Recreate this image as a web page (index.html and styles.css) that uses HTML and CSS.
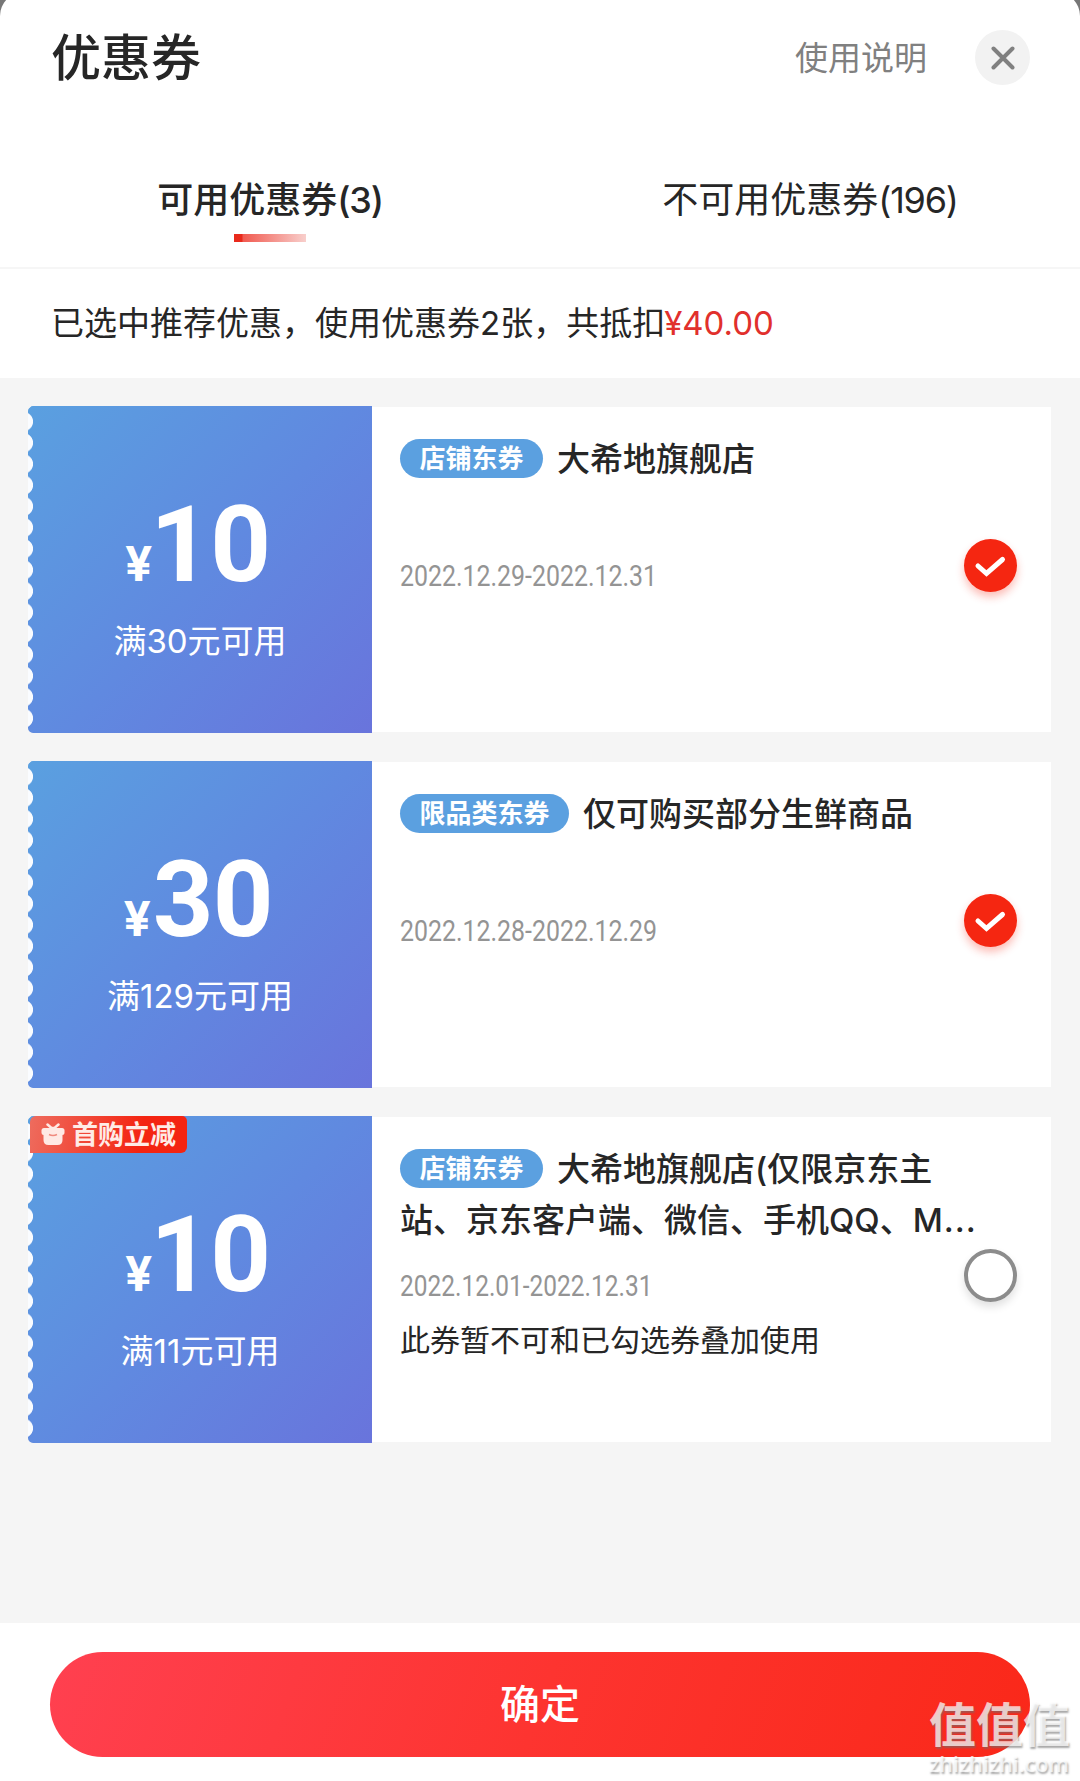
FILE: index.html
```html
<!DOCTYPE html>
<html lang="zh-CN">
<head>
<meta charset="utf-8">
<title>优惠券</title>
<link rel="stylesheet" href="styles.css">
</head>
<body>
<div class="sheet">
  <header class="header">
    <h1 class="heading">优惠券</h1>
    <span class="help">使用说明</span>
    <button class="close" aria-label="关闭">
      <svg width="24" height="24" viewBox="0 0 24 24"><path d="M2.5 2.5 21.5 21.5M21.5 2.5 2.5 21.5" stroke="#808080" stroke-width="4" stroke-linecap="round"/></svg>
    </button>
  </header>
  <nav class="tabs">
    <div class="tab tab-active"><span>可用优惠券<span class="count">(3)</span></span></div>
    <div class="tab"><span>不可用优惠券<span class="count">(196)</span></span></div>
  </nav>
  <p class="summary">已选中推荐优惠，使用优惠券2张，共抵扣<span class="saving">¥40.00</span></p>
  <main class="list">
    <article class="coupon">
      <div class="value">
        <div class="amount"><span class="yen">¥</span>10</div>
        <div class="rule">满30元可用</div>
      </div>
      <div class="info">
        <div class="name"><span class="tag">店铺东券</span>大希地旗舰店</div>
        <div class="date"><span>2022.12.29-2022.12.31</span></div>
      </div>
      <div class="pick">
        <span class="check"><svg width="53" height="53" viewBox="0 0 53 53"><path d="M14 27 22.500 34.500 38.500 20.500" fill="none" stroke="#fff" stroke-width="5" stroke-linecap="round" stroke-linejoin="miter"/></svg></span>
      </div>
    </article>
    <article class="coupon">
      <div class="value">
        <div class="amount amount-wide"><span class="yen">¥</span>30</div>
        <div class="rule">满129元可用</div>
      </div>
      <div class="info">
        <div class="name"><span class="tag">限品类东券</span>仅可购买部分生鲜商品</div>
        <div class="date"><span>2022.12.28-2022.12.29</span></div>
      </div>
      <div class="pick">
        <span class="check"><svg width="53" height="53" viewBox="0 0 53 53"><path d="M14 27 22.500 34.500 38.500 20.500" fill="none" stroke="#fff" stroke-width="5" stroke-linecap="round" stroke-linejoin="miter"/></svg></span>
      </div>
    </article>
    <article class="coupon">
      <div class="value">
        <div class="badge">
          <svg width="24" height="23" viewBox="0 0 24 23" fill="#ffe9e4"><path d="M6.500 1.500 10.500 5H13.500L17.500 1.500" fill="none" stroke="#ffe9e4" stroke-width="2.500" stroke-linecap="round"/><rect x="0.500" y="5" width="23" height="7" rx="2.500"/><path d="M2.500 11H21.500V17Q21.500 22 16.500 22H7.500Q2.500 22 2.500 17Z"/><path d="M8 11.500Q12 13.500 16 11.500" fill="none" stroke="#f08a7e" stroke-width="1.500"/></svg>
          首购立减
        </div>
        <div class="amount"><span class="yen">¥</span>10</div>
        <div class="rule">满11元可用</div>
      </div>
      <div class="info">
        <div class="name"><span class="tag">店铺东券</span>大希地旗舰店(仅限京东主<br>站、京东客户端、微信、手机QQ、<span class="tail">M...</span></div>
        <div class="date date-tight"><span>2022.12.01-2022.12.31</span></div>
        <div class="note">此券暂不可和已勾选券叠加使用</div>
      </div>
      <div class="pick"><span class="radio"></span></div>
    </article>
  </main>
  <footer class="footer">
    <button class="confirm">确定</button>
  </footer>
</div>
<div class="watermark"><span class="wm-name">值值值</span><span class="wm-site">zhizhizhi.com</span></div>
</body>
</html>
```
FILE: styles.css
```css
* { box-sizing: border-box; }
body {
  margin: 0;
  height: 1781px;
  overflow: hidden;
  position: relative;
  background: #777;
  color: #262626;
  font-family: Inter, "Noto Sans CJK SC", sans-serif;
}
button { border: 0; padding: 0; font-family: inherit; }
.sheet {
  display: flex;
  flex-direction: column;
  height: 1789px;
  margin-top: -8px;
  padding-top: 8px;
  border-radius: 24px 24px 0 0;
  background: #fff;
  overflow: hidden;
}
.header {
  display: flex;
  align-items: center;
  height: 115px;
  padding: 0 50px 0 51px;
}
.heading { margin: 0; flex: 1; font-size: 50px; line-height: 50px; font-weight: 500; }
.help { font-size: 33px; line-height: 48px; color: #808080; margin-right: 48px; }
.close {
  width: 55px;
  height: 55px;
  border-radius: 50%;
  background: #f2f2f2;
  display: flex;
  align-items: center;
  justify-content: center;
}
.tabs {
  display: flex;
  height: 154px;
  border-bottom: 2px solid #f6f6f6;
}
.tab {
  flex: 1;
  display: flex;
  flex-direction: column;
  align-items: center;
  padding-top: 59px;
  font-size: 36px;
  line-height: 52px;
}
.tab-active { font-weight: 500; }
.tab-active::after {
  content: "";
  width: 72px;
  height: 8px;
  margin-top: 8px;
  background: linear-gradient(90deg, #e92a1c 0 8px, #f15a50 9px, #f8cfcc 100%);
}
.count { letter-spacing: -1.2px; }
.summary { margin: 0; height: 109px; padding-left: 51px; font-size: 33px; line-height: 109px; white-space: nowrap; }
.saving { color: #e1302c; margin-left: -1px; }
.list {
  flex: 1;
  display: flex;
  flex-direction: column;
  gap: 28px;
  padding: 28px 29px 0 28px;
  background: #f5f5f5;
}
.coupon { display: flex; height: 327px; background: linear-gradient(#fff, #fff) 6px 1px / 100% 325px no-repeat; }
.value {
  position: relative;
  flex: none;
  width: 344px;
  padding-top: 83px;
  text-align: center;
  color: #fff;
  background:
    radial-gradient(ellipse 11px 10.4px at -5.5px 50%, #fafcff 92%, transparent) 0 5px / 12px 21.2px repeat-y,
    linear-gradient(132deg, #5aa0e0 0%, #6089e0 52%, #6974dc 100%);
  border-radius: 5px 0 0 5px;
}
.amount {
  font: 700 106px/112px Roboto, sans-serif;
  letter-spacing: -1px;
  padding-right: 5px;
}
.amount-wide { padding-right: 4px; }
.yen { font-family: Inter, sans-serif; font-size: 48px; margin-right: -1px; }
.amount-wide .yen { margin-right: 3px; }
.rule { margin-top: -3px; font-size: 33px; line-height: 48px; }
.badge {
  position: absolute;
  left: 2px;
  top: 0;
  width: 157px;
  height: 37px;
  padding-left: 11px;
  display: flex;
  align-items: center;
  gap: 7px;
  border-radius: 6px 5px 6px 0;
  background: linear-gradient(100deg, #ee6c5e, #f42411 70%);
  color: #ffebe6;
  font-size: 26px;
  font-weight: 700;
  line-height: 37px;
}
.info { flex: 1; min-width: 0; padding: 28px 0 0 28px; white-space: nowrap; }
.name { height: 102px; font-size: 33px; line-height: 51px; font-weight: 500; }
.tail { letter-spacing: 1px; }
.tag {
  display: inline-block;
  height: 39px;
  padding: 0 19.5px;
  margin-right: 14px;
  border-radius: 20px;
  background: #5ba0e0;
  color: #fff;
  font-size: 26px;
  font-weight: 700;
  line-height: 39px;
  vertical-align: 3px;
}
.date { height: 48px; margin-top: 16px; font: 400 30px/48px Roboto, sans-serif; color: #949494; }
.date span { display: inline-block; transform: scaleX(0.83); transform-origin: left; }
.date-tight span { transform: scaleX(0.815); }
.note { margin-top: 6px; font-size: 30px; line-height: 48px; }
.pick { flex: none; width: 87px; display: flex; align-items: center; padding-bottom: 9px; }
.check { width: 53px; height: 53px; border-radius: 50%; background: #f52611; box-shadow: 0 5px 9px rgba(245, 38, 17, 0.3); }
.check svg { display: block; }
.radio { width: 53px; height: 53px; border: 4px solid #8c8c8c; border-radius: 50%; box-shadow: 0 5px 9px rgba(0, 0, 0, 0.12); }
.footer { height: 158px; padding: 29px 50px 0; background: #fff; }
.confirm {
  width: 100%;
  height: 105px;
  border-radius: 53px;
  background: linear-gradient(110deg, #ff4050, #fd3430 50%, #fa2819);
  color: #fff;
  font-size: 40px;
  line-height: 105px;
  font-weight: 500;
}
.watermark {
  position: absolute;
  left: 929px;
  top: 1698px;
  width: 146px;
  display: flex;
  flex-direction: column;
  color: rgba(255, 255, 255, 0.72);
  text-shadow: 1px 2px 2px rgba(110, 110, 110, 0.6);
  white-space: nowrap;
}
.wm-name { font-size: 47px; line-height: 53px; font-weight: 700; }
.wm-site { font: 600 21.500px/25px "Open Sans", sans-serif; }
```
